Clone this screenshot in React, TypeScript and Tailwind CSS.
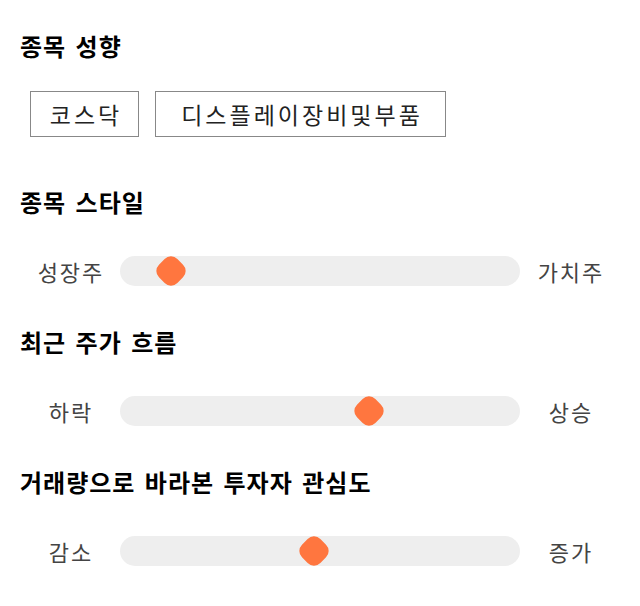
const sliders = [
  { title: '종목 스타일', left: '성장주', right: '가치주', value: 0.098 },
  { title: '최근 주가 흐름', left: '하락', right: '상승', value: 0.632 },
  { title: '거래량으로 바라본 투자자 관심도', left: '감소', right: '증가', value: 0.484 },
]

const chips = [
  { label: '코스닥', width: 'w-[109px]' },
  { label: '디스플레이장비및부품', width: 'w-[291px]' },
]

function Slider({ left, right, value }: { left: string; right: string; value: number }) {
  return (
    <div className="flex items-center h-[30px]">
      <div className="w-[100px] text-center text-[22px] tracking-[2px] indent-[2px] text-[#444]">{left}</div>
      <div className="relative w-[400px] h-[30px] rounded-full bg-[#eeeeee]">
        {/* thumb: rounded square turned 45deg */}
        <div
          className="absolute top-1/2 w-[26px] h-[26px] -translate-x-1/2 -translate-y-1/2 rotate-45 rounded-[9px] bg-[#ff763f]"
          style={{ left: `${14.5 + value * 371}px` }}
        />
      </div>
      <div className="w-[100px] text-center text-[22px] tracking-[2px] indent-[2px] text-[#444]">{right}</div>
    </div>
  )
}

export default function App() {
  return (
    <div
      className="w-[640px] h-[606px] bg-white px-5 pt-[32px]"
      style={{ fontFamily: '"Noto Sans CJK KR", "Noto Sans", sans-serif' }}
    >
      <h2 className="text-[24px] font-bold leading-[28px] tracking-[1px] text-black [word-spacing:3px]">종목 성향</h2>
      <div className="flex gap-4 mt-[31px] pl-[10px]">
        {chips.map(c => (
          <div
            key={c.label}
            className={`${c.width} h-[46px] flex items-center justify-center border border-[#888] text-[23px] tracking-[3px] indent-[3px] text-[#222]`}
          >
            {c.label}
          </div>
        ))}
      </div>
      {sliders.map((s, i) => (
        <div key={s.title} className={i === 0 ? 'mt-[51px]' : 'mt-[42px]'}>
          <h2 className="text-[24px] font-bold leading-[28px] tracking-[1px] text-black [word-spacing:3px]">{s.title}</h2>
          <div className="mt-[40px]">
            <Slider left={s.left} right={s.right} value={s.value} />
          </div>
        </div>
      ))}
    </div>
  )
}
